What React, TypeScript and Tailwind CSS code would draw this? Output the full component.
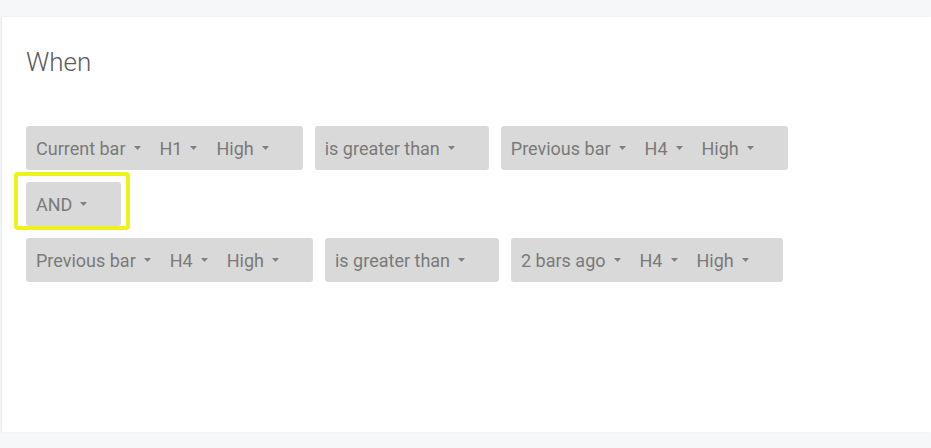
import React from 'react';

type Segment = string;

interface Condition {
  left: Segment[];
  op: Segment[];
  right: Segment[];
}

const conditions: Condition[] = [
  { left: ['Current bar', 'H1', 'High'], op: ['is greater than'], right: ['Previous bar', 'H4', 'High'] },
  { left: ['Previous bar', 'H4', 'High'], op: ['is greater than'], right: ['2 bars ago', 'H4', 'High'] },
];

function Caret() {
  return (
    <svg width="7" height="4" viewBox="0 0 7 4" className="ml-[8px] shrink-0">
      <path d="M0 0 L7 0 L3.5 4 Z" fill="#808080" />
    </svg>
  );
}

function Picker({ items }: { items: Segment[] }) {
  return (
    <div className="flex items-center h-[44px] pl-[10px] bg-[#d9d9d9] rounded-[3px] text-[18px] text-[#7a7a7a]">
      {items.map((item, i) => (
        <span key={i} className="flex items-center pr-[19px] last:pr-[34px] whitespace-nowrap">
          {item}
          <Caret />
        </span>
      ))}
    </div>
  );
}

export default function App() {
  return (
    <div
      className="min-h-[448px] bg-[#f6f7f9] pt-[17px] pl-[2px]"
      style={{ fontFamily: 'Roboto, "Liberation Sans", sans-serif' }}
    >
      <div className="h-[415px] bg-white shadow-[-1px_0_2px_rgba(0,0,0,0.06)] pt-[29px] pl-[24px]">
        <h2 className="text-[26px] leading-[32px] font-light text-[#5a5a5a]">When</h2>

        <div className="mt-[48px] flex flex-col gap-[12px]">
          <div className="flex gap-[12px]">
            <Picker items={conditions[0].left} />
            <Picker items={conditions[0].op} />
            <Picker items={conditions[0].right} />
          </div>

          <div className="flex">
            <div className="relative">
              {/* highlight ring around the joiner */}
              <div className="absolute left-[-12px] top-[-10px] w-[116px] h-[58px] border-[4px] border-[#eef21a] rounded-[4px]" />
              <Picker items={['AND']} />
            </div>
          </div>

          <div className="flex gap-[12px]">
            <Picker items={conditions[1].left} />
            <Picker items={conditions[1].op} />
            <Picker items={conditions[1].right} />
          </div>
        </div>
      </div>
    </div>
  );
}
